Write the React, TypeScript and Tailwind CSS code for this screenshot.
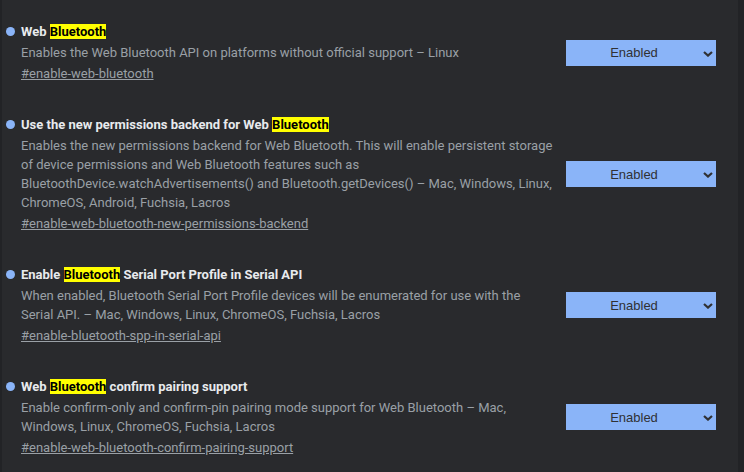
import React from "react";

type Item = {
  title: React.ReactNode;
  desc: string;
  link: string;
};

const HL = () => <span className="bg-[#ffff00] text-black">Bluetooth</span>;

const items: Item[] = [
  {
    title: (
      <>
        Web <HL />
      </>
    ),
    desc: "Enables the Web Bluetooth API on platforms without official support – Linux",
    link: "#enable-web-bluetooth",
  },
  {
    title: (
      <>
        Use the new permissions backend for Web <HL />
      </>
    ),
    desc:
      "Enables the new permissions backend for Web Bluetooth. This will enable persistent storage of device permissions and Web Bluetooth features such as BluetoothDevice.watchAdvertisements() and Bluetooth.getDevices() – Mac, Windows, Linux, ChromeOS, Android, Fuchsia, Lacros",
    link: "#enable-web-bluetooth-new-permissions-backend",
  },
  {
    title: (
      <>
        Enable <HL /> Serial Port Profile in Serial API
      </>
    ),
    desc:
      "When enabled, Bluetooth Serial Port Profile devices will be enumerated for use with the Serial API. – Mac, Windows, Linux, ChromeOS, Fuchsia, Lacros",
    link: "#enable-bluetooth-spp-in-serial-api",
  },
  {
    title: (
      <>
        Web <HL /> confirm pairing support
      </>
    ),
    desc:
      "Enable confirm-only and confirm-pin pairing mode support for Web Bluetooth – Mac, Windows, Linux, ChromeOS, Fuchsia, Lacros",
    link: "#enable-web-bluetooth-confirm-pairing-support",
  },
];

function Select() {
  return (
    <div className="relative flex h-[26px] w-[150px] shrink-0 items-center justify-center bg-[#8ab4f8] pr-[14px] pt-[1px] font-['Liberation_Sans',Arial,sans-serif] text-[13px] text-[#303134]">
      Enabled
      <svg
        className="absolute right-[3px] top-[11px]"
        width="10"
        height="6"
        viewBox="0 0 10 6"
      >
        <path d="M1 1 L5 4.6 L9 1" fill="none" stroke="#303134" strokeWidth="2.2" />
      </svg>
    </div>
  );
}

export default function App() {
  return (
    <div className="flex h-[472px] w-[744px] overflow-hidden bg-[#222326] font-['Roboto',sans-serif]">
      <div className="ml-[2px] mr-[6px] flex flex-1 flex-col gap-[32px] bg-[#292a2d] pt-[22px]">
        {items.map((it, i) => (
          <div key={i} className="flex items-center">
            <div className="w-[551px] shrink-0">
              <div className="flex items-center pl-[4px] text-[13px] font-bold leading-[19px] text-[#e8eaed]">
                <span className="mr-[6px] block h-[9px] w-[9px] min-w-[9px] shrink-0 rounded-full bg-[#8ab4f8]" />
                <span>{it.title}</span>
              </div>
              <div className="mt-[2px] pl-[19px] text-[13px] leading-[19px] text-[#9aa0a6]">
                {it.desc}
              </div>
              <div className="mt-[2px] pl-[19px] text-[13px] leading-[19px] text-[#9aa0a6]">
                <span className="underline">{it.link}</span>
              </div>
            </div>
            <div className="ml-[13px]">
              <Select />
            </div>
          </div>
        ))}
      </div>
    </div>
  );
}
